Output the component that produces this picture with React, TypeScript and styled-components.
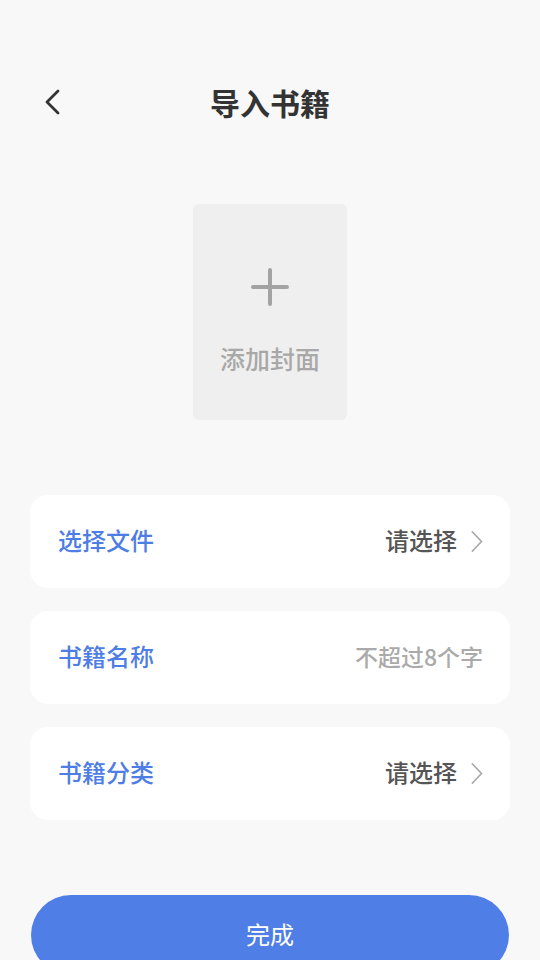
import React from 'react';
import styled, { createGlobalStyle } from 'styled-components';

const GlobalStyle = createGlobalStyle`
    html, body {
        margin: 0;
        padding: 0;
        background: #f8f8f8;
        overflow: hidden;
    }
    body {
        font-family: "Noto Sans CJK SC", "Noto Sans", sans-serif;
    }
`;

const Page = styled.div`
    width: 540px;
    min-height: 960px;
    display: flex;
    flex-direction: column;
    align-items: center;
    padding-top: 72px;
    box-sizing: border-box;
    & > * {
        flex-shrink: 0;
    }
`;

const Header = styled.div`
    width: 100%;
    height: 60px;
    display: grid;
    grid-template-columns: 1fr auto 1fr;
    align-items: center;
`;

const BackButton = styled.button`
    justify-self: start;
    margin-left: 40px;
    width: 24px;
    height: 30px;
    padding: 0;
    border: none;
    background: none;
    display: flex;
    align-items: center;
    justify-content: center;
    cursor: pointer;
`;

const Title = styled.h1`
    margin: 0;
    font-size: 30px;
    font-weight: 700;
    color: #333333;
    line-height: 58px;
`;

const Cover = styled.div`
    margin-top: 72px;
    width: 154px;
    height: 216px;
    border-radius: 6px;
    background: #efefef;
    display: flex;
    flex-direction: column;
    align-items: center;
    padding-top: 64px;
    box-sizing: border-box;
`;

const CoverText = styled.div`
    margin-top: 36px;
    font-size: 25px;
    line-height: 32px;
    color: #a8a8a8;
    font-weight: 500;
`;

const Fields = styled.div`
    margin-top: 75px;
    width: 480px;
    display: flex;
    flex-direction: column;
    gap: 23px;
`;

const Card = styled.div`
    height: 93px;
    border-radius: 18px;
    background: #ffffff;
    display: flex;
    align-items: center;
    justify-content: space-between;
    padding: 0 27px 4px 28px;
    box-sizing: border-box;
`;

const Label = styled.span`
    font-size: 24px;
    font-weight: 500;
    color: #4e7de6;
`;

const Value = styled.span<{ $muted?: boolean }>`
    display: flex;
    align-items: center;
    gap: 14px;
    font-size: ${(p) => (p.$muted ? '23px' : '24px')};
    font-weight: 500;
    color: ${(p) => (p.$muted ? '#aaaaaa' : '#555555')};

    svg {
        margin-top: 3px;
    }
`;

const DoneButton = styled.button`
    margin-top: 75px;
    width: 478px;
    height: 80px;
    padding-bottom: 4px;
    border: none;
    border-radius: 40px;
    background: #4f7ee6;
    color: #ffffff;
    font-family: inherit;
    font-size: 24px;
    font-weight: 400;
    cursor: pointer;
`;

function Chevron() {
    return (
        <svg width="12" height="21" viewBox="0 0 12 21" fill="none">
            <path d="M1.5 1L10.5 10.5L1.5 20" stroke="#aaaaaa" strokeWidth="1.8" strokeLinecap="round" strokeLinejoin="round" />
        </svg>
    );
}

interface FieldProps {
    label: string,
    value: string,
    placeholder?: boolean,
}
function Field(props: FieldProps) {
    return (
        <Card>
            <Label>{props.label}</Label>
            <Value $muted={props.placeholder}>
                {props.value}
                {!props.placeholder && <Chevron />}
            </Value>
        </Card>
    );
}

export default function App() {
    return (
        <>
            <GlobalStyle />
            <Page>
                <Header>
                    <BackButton>
                        <svg width="16" height="26" viewBox="0 0 16 26" fill="none">
                            <path d="M14 2L3 13L14 24" stroke="#333333" strokeWidth="2.8" strokeLinecap="round" strokeLinejoin="round" />
                        </svg>
                    </BackButton>
                    <Title>导入书籍</Title>
                    <div />
                </Header>
                <Cover>
                    <svg width="38" height="38" viewBox="0 0 38 38">
                        <path d="M19 2V36M2 19H36" stroke="#a3a3a3" strokeWidth="4" strokeLinecap="round" />
                    </svg>
                    <CoverText>添加封面</CoverText>
                </Cover>
                <Fields>
                    <Field label="选择文件" value="请选择" />
                    <Field label="书籍名称" value="不超过8个字" placeholder />
                    <Field label="书籍分类" value="请选择" />
                </Fields>
                <DoneButton>完成</DoneButton>
            </Page>
        </>
    );
}
